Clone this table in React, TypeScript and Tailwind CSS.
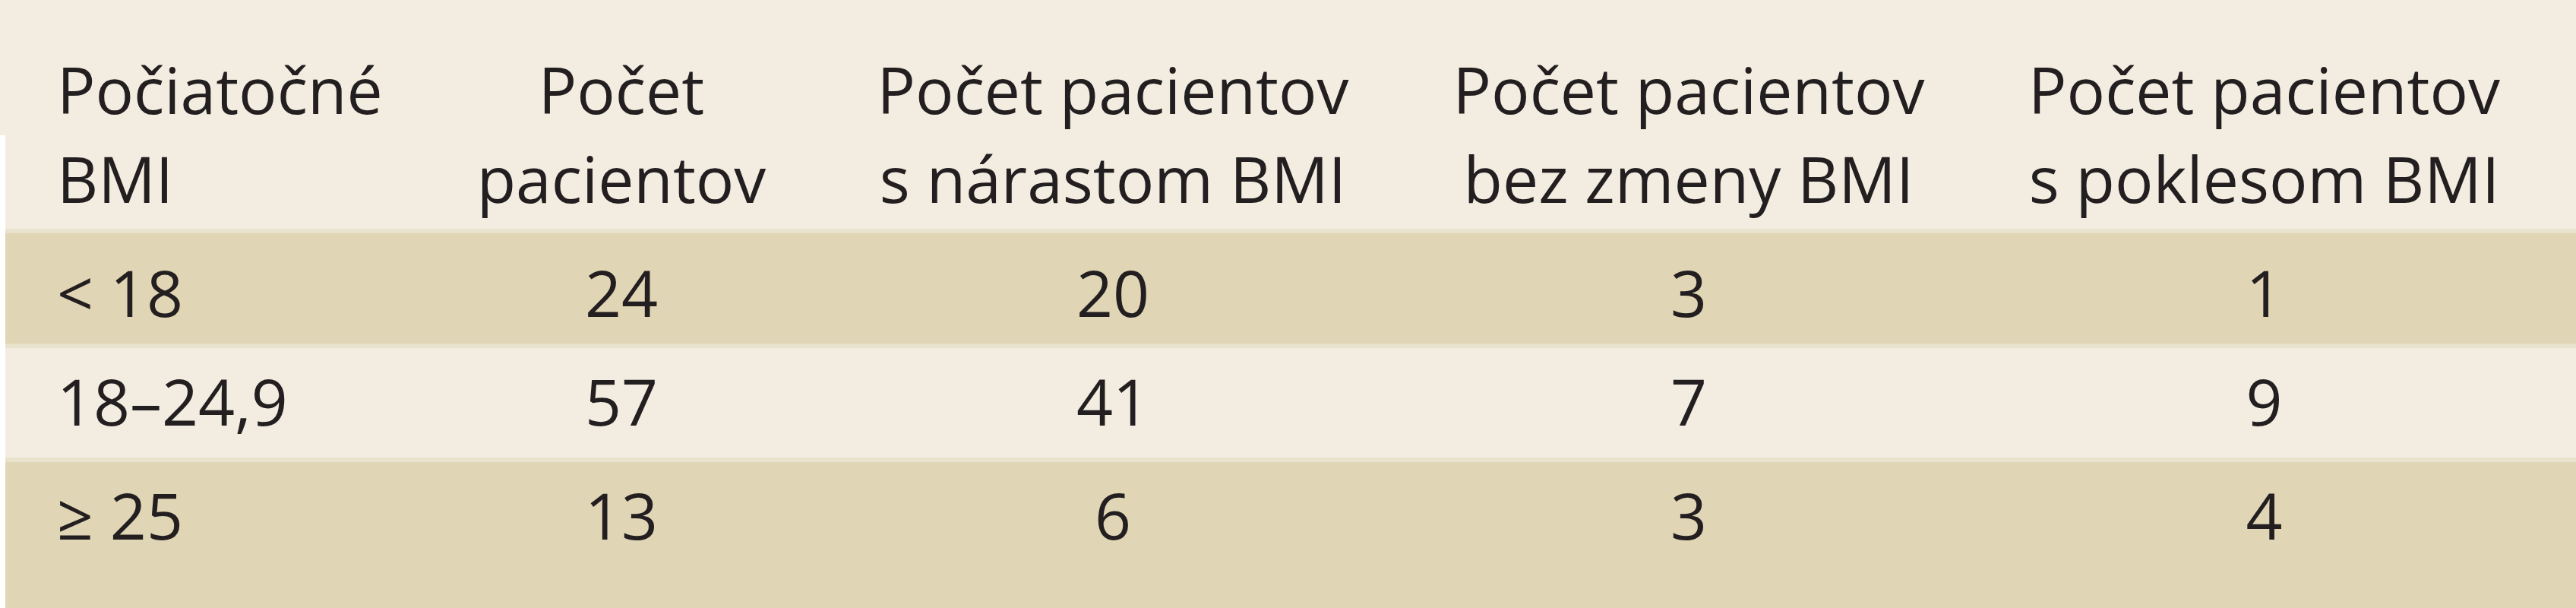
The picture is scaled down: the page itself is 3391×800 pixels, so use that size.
const headers: [string, string][] = [
  ["Počiatočné", "BMI"],
  ["Počet", "pacientov"],
  ["Počet pacientov", "s nárastom BMI"],
  ["Počet pacientov", "bez zmeny BMI"],
  ["Počet pacientov", "s poklesom BMI"],
];

const rows = [
  { label: "< 18", values: ["24", "20", "3", "1"], bg: "bg-[#e0d5b4]", h: "h-[145px] pt-[19px]" },
  { label: "18–24,9", values: ["57", "41", "7", "9"], bg: "bg-[#f2ede0]", h: "h-[144px] pt-[11px]" },
  { label: "≥ 25", values: ["13", "6", "3", "4"], bg: "bg-[#e0d5b4]", h: "h-[192px] pt-[11px]" },
];

// fixed column widths so the centred numbers land under the header text
const cols = "grid grid-cols-[575px_472px_822px_694px_821px]";

function Band() {
  return <div className="h-[6px] bg-[#e9e2cc]" />;
}

export default function App() {
  return (
    <div className="flex h-[800px] w-[3391px] overflow-hidden bg-white font-['Open_Sans',sans-serif] text-[84px] leading-[117px] text-[#231f20]">
      <div className="flex w-[7px] flex-col">
        <div className="h-[178px] bg-[#f2ede0]" />
        <div className="flex-1 bg-white" />
      </div>
      <div className="flex flex-1 flex-col">
        <div className={`${cols} h-[301px] bg-[#f2ede0] pt-[59px]`}>
          {headers.map(([a, b], i) => (
            <div key={i} className={i === 0 ? "pl-[68px]" : "text-center"}>
              {a}
              <br />
              {b}
            </div>
          ))}
        </div>
        {rows.map((r) => (
          <div key={r.label}>
            <Band />
            <div className={`${cols} ${r.bg} ${r.h}`}>
              <div className="whitespace-pre pl-[68px]">{r.label}</div>
              {r.values.map((v, i) => (
                <div key={i} className="text-center">
                  {v}
                </div>
              ))}
            </div>
          </div>
        ))}
      </div>
    </div>
  );
}
